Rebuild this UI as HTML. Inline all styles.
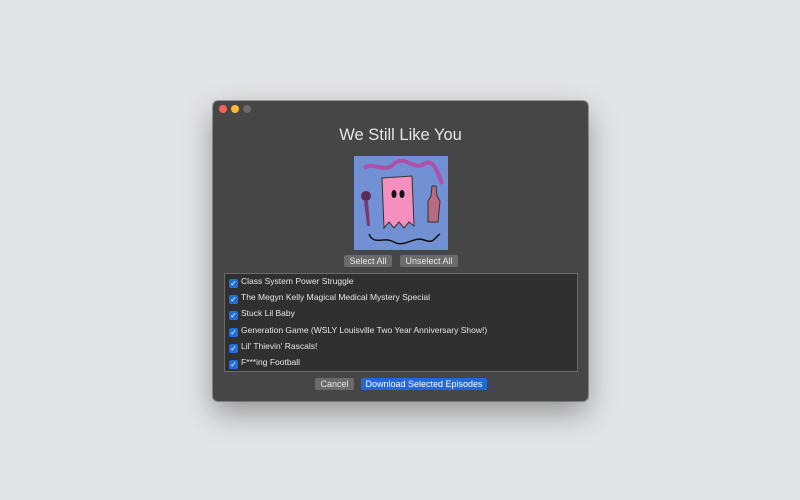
<!DOCTYPE html>
<html><head><style>
body{margin:0;width:800px;height:500px;background:#e3e4e6;font-family:"Liberation Sans",sans-serif;position:relative;overflow:hidden}
.win{position:absolute;left:213px;top:101px;width:375px;height:300px;background:#464646;border-radius:5px;box-shadow:0 12px 30px rgba(0,0,0,.35),0 0 0 1px rgba(0,0,0,.3)}
.dot{position:absolute;top:4px;width:8px;height:8px;border-radius:50%}
.t{position:absolute;left:0;right:0;top:25px;text-align:center;color:#e6e6e6;font-size:16.5px}
.art{position:absolute;left:141px;top:55px;width:94px;height:94px;background:#7290d4}
.btn{position:absolute;height:12px;background:#6b6b6b;color:#e8e8e8;font-size:9px;line-height:12px;text-align:center;border-radius:2px}
.list{position:absolute;left:11px;top:172px;width:352px;height:97px;background:#303030;border:1px solid #6a6a6a}
.row{position:absolute;left:4px;height:12px;color:#e6e6e6;font-size:8.5px;line-height:12px;white-space:nowrap}
.cb{display:inline-block;width:9px;height:9px;background:#1f6fe0;border-radius:2px;vertical-align:-1.5px;margin-right:3px;color:#fff;font-size:8px;line-height:9px;text-align:center}
</style></head><body>
<div class="win">
<div class="dot" style="left:6px;background:#fe5f57"></div>
<div class="dot" style="left:18px;background:#febc2e"></div>
<div class="dot" style="left:30px;background:#6a6a6a"></div>
<div class="t">We Still Like You</div>
<div class="art">
<svg width="94" height="94" viewBox="0 0 94 94">
<path d="M10 12 C20 5 30 18 40 8 S60 15 70 8 S85 20 88 28" stroke="#b04fa8" stroke-width="4" fill="none"/>
<path d="M28 22 L58 20 L60 70 L55 66 L50 72 L45 66 L40 72 L35 66 L30 72 Z" fill="#f48fbf" stroke="#333" stroke-width="1"/>
<ellipse cx="40" cy="38" rx="2.5" ry="4" fill="#111"/><ellipse cx="48" cy="38" rx="2.5" ry="4" fill="#111"/>
<circle cx="12" cy="40" r="5" fill="#5b2a57"/><path d="M10 45 L14 45 L16 70 L13 70Z" fill="#7a3a6f"/>
<path d="M78 30 L82 30 L83 40 L86 45 L84 66 L74 66 L74 45 L77 40Z" fill="#b86a80" stroke="#333" stroke-width="1"/>
<path d="M15 78 C20 90 30 80 40 86 S60 80 70 84 S80 82 86 78" stroke="#111" stroke-width="1.5" fill="none"/>
</svg></div>
<div class="btn" style="left:131px;top:154px;width:48px">Select All</div>
<div class="btn" style="left:187px;top:154px;width:58px">Unselect All</div>
<div class="list">
<div class="row" style="top:1px"><span class="cb">✓</span>Class System Power Struggle</div>
<div class="row" style="top:17px"><span class="cb">✓</span>The Megyn Kelly Magical Medical Mystery Special</div>
<div class="row" style="top:33px"><span class="cb">✓</span>Stuck Lil Baby</div>
<div class="row" style="top:50px"><span class="cb">✓</span>Generation Game (WSLY Louisville Two Year Anniversary Show!)</div>
<div class="row" style="top:66px"><span class="cb">✓</span>Lil' Thievin' Rascals!</div>
<div class="row" style="top:82px"><span class="cb">✓</span>F***ing Football</div>
</div>
<div class="btn" style="left:102px;top:277px;width:39px">Cancel</div>
<div class="btn" style="left:148px;top:277px;width:126px;background:#1d6ae0;color:#fff">Download Selected Episodes</div>
</div>
</body></html>
